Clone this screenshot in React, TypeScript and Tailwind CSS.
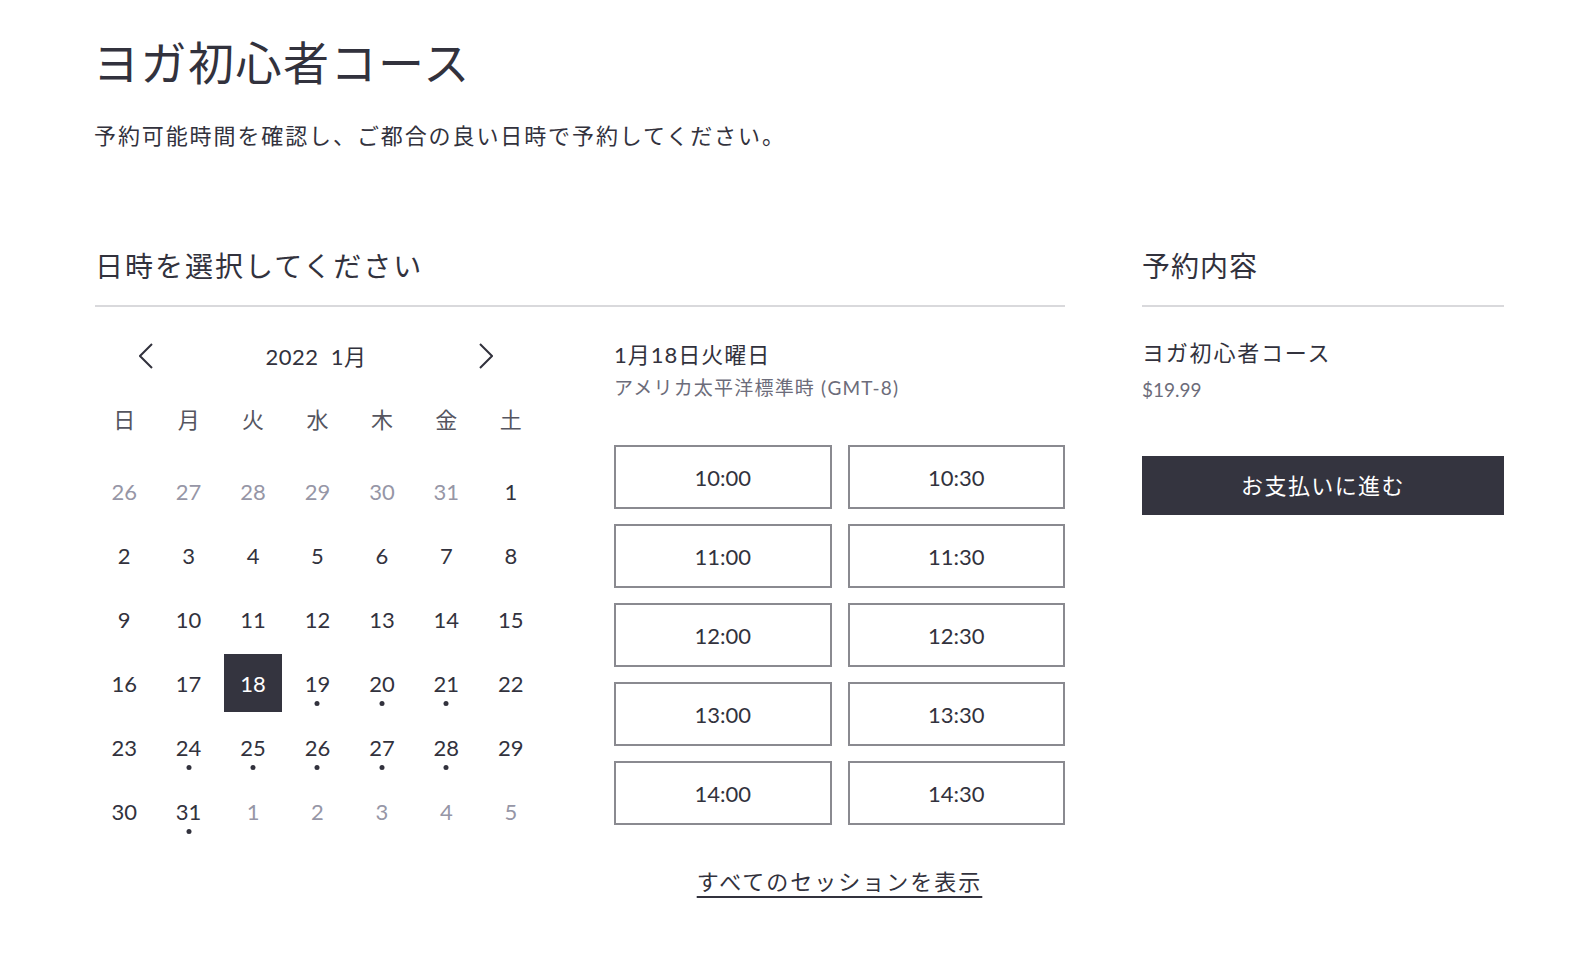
const WEEKDAYS = ["日", "月", "火", "水", "木", "金", "土"];

type Day = { n: number; muted?: boolean; dot?: boolean; selected?: boolean };

const DAYS: Day[] = [
  ...[26, 27, 28, 29, 30, 31].map((n) => ({ n, muted: true })),
  ...Array.from({ length: 31 }, (_, i) => {
    const n = i + 1;
    return { n, dot: n >= 19 && n !== 22 && n !== 23 && n !== 29 && n !== 30, selected: n === 18 };
  }),
  ...[1, 2, 3, 4, 5].map((n) => ({ n, muted: true })),
];

const SLOTS = ["10:00", "10:30", "11:00", "11:30", "12:00", "12:30", "13:00", "13:30", "14:00", "14:30"];

function Chevron({ dir }: { dir: "left" | "right" }) {
  return (
    <svg width="14" height="26" viewBox="0 0 14 26" fill="none" stroke="#32323d" strokeWidth="2">
      <polyline points={dir === "left" ? "13,1 1,13 13,25" : "1,1 13,13 1,25"} />
    </svg>
  );
}

function SectionTitle({ children, tracking }: { children: React.ReactNode; tracking: string }) {
  return (
    <h2
      className={`border-b-2 border-[#d9d9dc] pb-[19px] text-[28px] leading-[40px] text-[#32323d] ${tracking}`}
    >
      {children}
    </h2>
  );
}

function Calendar() {
  return (
    <div className="mt-[25px] ml-[-3px] w-[451px]">
      <div className="flex h-12 items-center justify-between pr-[50px] pl-[47px] text-[#32323d]">
        <Chevron dir="left" />
        <span className="text-[22px] tracking-[0.5px]">2022&nbsp;&nbsp;1月</span>
        <Chevron dir="right" />
      </div>
      <div className="mt-[19px] grid h-10 grid-cols-7 items-center text-center text-[22px] text-[#55555f]">
        {WEEKDAYS.map((w) => (
          <span key={w}>{w}</span>
        ))}
      </div>
      <div className="mt-[20px] grid grid-cols-7">
        {DAYS.map((d, i) => (
          <div key={i} className="relative flex h-16 items-center justify-center">
            <span
              className={
                d.selected
                  ? "flex h-[58px] w-[58px] items-center justify-center bg-[#34343f] text-[22px] text-white"
                  : d.muted
                    ? "text-[22px] text-[#9696a6]"
                    : "text-[22px] text-[#32323d]"
              }
            >
              {d.n}
            </span>
            {d.dot && (
              <span className="absolute top-[50px] left-1/2 h-[5px] w-[5px] -translate-x-1/2 rounded-full bg-[#32323d]" />
            )}
          </div>
        ))}
      </div>
    </div>
  );
}

function Times() {
  return (
    <div className="mt-[32px] w-[451px]">
      <p className="text-[22px] leading-[32px] tracking-[1px] text-[#32323d]">1月18日火曜日</p>
      <p className="mt-[3px] text-[19px] leading-[28px] tracking-[1.2px] text-[#6c6c7a]">
        アメリカ太平洋標準時 (GMT-8)
      </p>
      <div className="mt-[43px] grid grid-cols-2 gap-x-4 gap-y-[15px]">
        {SLOTS.map((s) => (
          <button
            key={s}
            className="flex h-16 items-center justify-center border-2 border-[#8a8a90] bg-white text-[22px] text-[#32323d]"
          >
            {s}
          </button>
        ))}
      </div>
      <div className="mt-[42px] text-center">
        <a className="text-[22px] leading-[30px] tracking-[2px] text-[#32323d] underline decoration-[2px] underline-offset-[6px]">
          すべてのセッションを表示
        </a>
      </div>
    </div>
  );
}

export default function App() {
  return (
    <div
      className="min-h-screen bg-white pt-[33px] pr-[90px] pl-[95px] text-[#32323d]"
      style={{ fontFamily: "Lato, 'Noto Sans CJK JP', sans-serif" }}
    >
      <h1 className="ml-[-2px] text-[46px] leading-[60px] tracking-[1.5px]">ヨガ初心者コース</h1>
      <p className="mt-[28px] ml-[-1px] text-[22px] leading-[30px] tracking-[1.9px]">
        予約可能時間を確認し、ご都合の良い日時で予約してください。
      </p>

      <div className="mt-[95px] flex gap-[77px]">
        <section className="w-[970px] shrink-0">
          <SectionTitle tracking="tracking-[2px]">日時を選択してください</SectionTitle>
          <div className="flex justify-between">
            <Calendar />
            <Times />
          </div>
        </section>

        <aside className="w-[362px] shrink-0">
          <SectionTitle tracking="tracking-[1px]">予約内容</SectionTitle>
          <p className="mt-[30px] text-[22px] leading-[32px] tracking-[1.8px]">ヨガ初心者コース</p>
          <p className="mt-[8px] text-[19px] leading-[26px] text-[#6c6c7a]">$19.99</p>
          <button className="mt-[53px] flex h-[59px] w-full items-center justify-center bg-[#34343f] text-[22px] tracking-[1.4px] text-white">
            お支払いに進む
          </button>
        </aside>
      </div>
    </div>
  );
}
